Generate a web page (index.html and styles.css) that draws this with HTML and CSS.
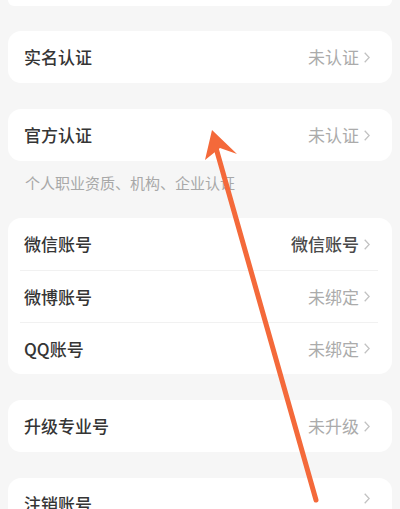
FILE: index.html
```html
<!DOCTYPE html>
<html lang="zh">
<head>
<meta charset="utf-8">
<link rel="stylesheet" href="styles.css">
</head>
<body>
<div class="page">
  <div class="top-card"></div>
  <div class="card">
    <div class="row"><span class="label">实名认证</span><span class="value">未认证<svg class="chev" width="6" height="11" viewBox="0 0 6 11"><polyline points="0.7,0.7 5.2,5.5 0.7,10.3" fill="none" stroke="#c2c2c2" stroke-width="1.3"/></svg></span></div>
  </div>
  <div class="card">
    <div class="row"><span class="label">官方认证</span><span class="value">未认证<svg class="chev" width="6" height="11" viewBox="0 0 6 11"><polyline points="0.7,0.7 5.2,5.5 0.7,10.3" fill="none" stroke="#c2c2c2" stroke-width="1.3"/></svg></span></div>
  </div>
  <div class="caption">个人职业资质、机构、企业认证</div>
  <div class="card">
    <div class="row"><span class="label">微信账号</span><span class="value dark">微信账号<svg class="chev" width="6" height="11" viewBox="0 0 6 11"><polyline points="0.7,0.7 5.2,5.5 0.7,10.3" fill="none" stroke="#c2c2c2" stroke-width="1.3"/></svg></span></div>
    <div class="row sep"><span class="label">微博账号</span><span class="value">未绑定<svg class="chev" width="6" height="11" viewBox="0 0 6 11"><polyline points="0.7,0.7 5.2,5.5 0.7,10.3" fill="none" stroke="#c2c2c2" stroke-width="1.3"/></svg></span></div>
    <div class="row sep"><span class="label">QQ账号</span><span class="value">未绑定<svg class="chev" width="6" height="11" viewBox="0 0 6 11"><polyline points="0.7,0.7 5.2,5.5 0.7,10.3" fill="none" stroke="#c2c2c2" stroke-width="1.3"/></svg></span></div>
  </div>
  <div class="card">
    <div class="row"><span class="label">升级专业号</span><span class="value">未升级<svg class="chev" width="6" height="11" viewBox="0 0 6 11"><polyline points="0.7,0.7 5.2,5.5 0.7,10.3" fill="none" stroke="#c2c2c2" stroke-width="1.3"/></svg></span></div>
  </div>
  <div class="card last">
    <div class="row"><span class="label">注销账号</span><span class="value"><svg class="chev" width="6" height="11" viewBox="0 0 6 11"><polyline points="0.7,0.7 5.2,5.5 0.7,10.3" fill="none" stroke="#c2c2c2" stroke-width="1.3"/></svg></span></div>
  </div>
</div>
<svg class="arrow" width="400" height="509" viewBox="0 0 400 509">
  <line x1="316" y1="500" x2="216" y2="148" stroke="#f4693a" stroke-width="5" stroke-linecap="round"/>
  <polygon points="212,130 237,154 220,148 205,160" fill="#f4693a"/>
</svg>
</body>
</html>
```
FILE: styles.css
```css
html, body {
  margin: 0;
  padding: 0;
  background: #f6f6f6;
  font-family: "Noto Sans CJK SC", "Noto Sans", sans-serif;
  overflow: hidden;
}
.page {
  position: relative;
  width: 400px;
  height: 509px;
  padding: 0 8px;
  box-sizing: border-box;
  display: flex;
  flex-direction: column;
  overflow: hidden;
}
.top-card {
  height: 6px;
  background: #fff;
  border-radius: 0 0 12px 12px;
  margin-bottom: 25px;
  flex: none;
}
.card {
  background: #fff;
  border-radius: 13px;
  margin-bottom: 26px;
  padding: 0 22px 0 16px;
  flex: none;
}
.row {
  height: 52px;
  display: flex;
  align-items: center;
  justify-content: space-between;
  box-sizing: border-box;
}
.card.last .row {
  align-items: flex-start;
  padding-top: 15px;
}
.row.sep {
  border-top: 1px solid #f1f1f1;
  margin: 0 -8px 0 -4px;
  padding: 0 8px 0 4px;
}
.label {
  font-size: 17px;
  line-height: 22px;
  color: #353535;
  font-weight: 500;
}
.value {
  font-size: 17px;
  line-height: 22px;
  color: #ababab;
  display: flex;
  align-items: center;
}
.value.dark {
  color: #4a4a4a;
  font-weight: 500;
}
.chev {
  display: block;
  margin-left: 5px;
}
.caption {
  font-size: 15px;
  color: #a8a8a8;
  padding: 11px 0 0 17px;
  height: 57px;
  margin-top: -26px;
  box-sizing: border-box;
  line-height: 22px;
  flex: none;
}
.arrow {
  position: absolute;
  left: 0;
  top: 0;
  pointer-events: none;
}
```
